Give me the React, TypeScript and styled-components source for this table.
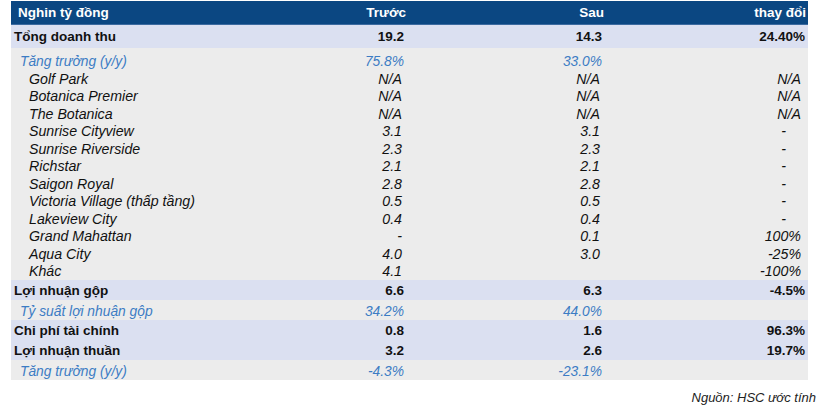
import React from "react";
import styled, { createGlobalStyle } from "styled-components";

type Kind = "total" | "growth" | "item";

interface Row {
  label: string;
  kind: Kind;
  before: string;
  after: string;
  change: string;
  height: number;
}

const rows: Row[] = [
  { label: "Tổng doanh thu", kind: "total", before: "19.2", after: "14.3", change: "24.40%", height: 23 },
  { label: "Tăng trưởng (y/y)", kind: "growth", before: "75.8%", after: "33.0%", change: "", height: 22 },
  { label: "Golf Park", kind: "item", before: "N/A", after: "N/A", change: "N/A", height: 17.5 },
  { label: "Botanica Premier", kind: "item", before: "N/A", after: "N/A", change: "N/A", height: 17.5 },
  { label: "The Botanica", kind: "item", before: "N/A", after: "N/A", change: "N/A", height: 17.5 },
  { label: "Sunrise Cityview", kind: "item", before: "3.1", after: "3.1", change: "-", height: 17.5 },
  { label: "Sunrise Riverside", kind: "item", before: "2.3", after: "2.3", change: "-", height: 17.5 },
  { label: "Richstar", kind: "item", before: "2.1", after: "2.1", change: "-", height: 17.5 },
  { label: "Saigon Royal", kind: "item", before: "2.8", after: "2.8", change: "-", height: 17.5 },
  { label: "Victoria Village (thấp tầng)", kind: "item", before: "0.5", after: "0.5", change: "-", height: 17.5 },
  { label: "Lakeview City", kind: "item", before: "0.4", after: "0.4", change: "-", height: 17.5 },
  { label: "Grand Mahattan", kind: "item", before: "-", after: "0.1", change: "100%", height: 17.5 },
  { label: "Aqua City", kind: "item", before: "4.0", after: "3.0", change: "-25%", height: 17.5 },
  { label: "Khác", kind: "item", before: "4.1", after: "", change: "-100%", height: 17.5 },
  { label: "Lợi nhuận gộp", kind: "total", before: "6.6", after: "6.3", change: "-4.5%", height: 20 },
  { label: "Tỷ suất lợi nhuận gộp", kind: "growth", before: "34.2%", after: "44.0%", change: "", height: 20 },
  { label: "Chi phí tài chính", kind: "total", before: "0.8", after: "1.6", change: "96.3%", height: 20 },
  { label: "Lợi nhuận thuần", kind: "total", before: "3.2", after: "2.6", change: "19.7%", height: 20 },
  { label: "Tăng trưởng (y/y)", kind: "growth", before: "-4.3%", after: "-23.1%", change: "", height: 20 },
];

const App = () => {
  return (
    <>
      <GlobalStyle />
      <Page>
        <Table>
          <HeaderRow>
            <HeadLabel>Nghin tỷ đồng</HeadLabel>
            <HeadCell>Trước</HeadCell>
            <HeadCell>Sau</HeadCell>
            <HeadCell>thay đổi</HeadCell>
          </HeaderRow>
          {rows.map((row, i) => (
            <BodyRow key={row.label + i} $kind={row.kind} style={{ height: row.height }}>
              <Label $kind={row.kind}>{row.label}</Label>
              <Value $kind={row.kind} $pad={row.kind === "item" ? 4 : 2}>
                {row.before}
              </Value>
              <Value $kind={row.kind} $pad={row.kind === "item" ? 4 : 2}>
                {row.after}
              </Value>
              <Value $kind={row.kind} $pad={row.change === "-" ? 20 : row.kind === "item" ? 5 : 1}>
                {row.change}
              </Value>
            </BodyRow>
          ))}
        </Table>
        <Source>Nguồn: HSC ước tính</Source>
      </Page>
    </>
  );
};

export default App;

const GlobalStyle = createGlobalStyle`
  body {
    margin: 0;
    background: #ffffff;
    font-family: "Liberation Sans", Arial, sans-serif;
  }
`;

const Page = styled.div`
  width: 824px;
  height: 413px;
  padding: 1px 8px 0 11px;
  box-sizing: border-box;
`;

const Table = styled.div`
  width: 797px;
  display: flex;
  flex-direction: column;
`;

const columns = "269px 126px 198px 202px";

const HeaderRow = styled.div`
  display: grid;
  grid-template-columns: ${columns};
  height: 24px;
  align-items: center;
  padding-right: 2px;
  background-color: #0b4782;
  border-bottom: 1px solid #3b6aa0;
  box-sizing: border-box;
  color: #ffffff;
  font-weight: bold;
  font-size: 13.5px;
`;

const HeadLabel = styled.div`
  padding-left: 7px;
`;

const HeadCell = styled.div`
  text-align: right;
`;

const BodyRow = styled.div<{ $kind: Kind }>`
  display: grid;
  grid-template-columns: ${columns};
  align-items: ${(p) => (p.$kind === "growth" ? "end" : "center")};
  padding-right: 2px;
  padding-bottom: ${(p) => (p.$kind === "growth" ? "1px" : "0")};
  box-sizing: border-box;
  background-color: ${(p) => (p.$kind === "total" ? "#dbe0f1" : "#ececec")};
`;

const fontSize = (k: Kind) => (k === "total" ? "13.5px" : k === "growth" ? "13.8px" : "14.2px");

const Label = styled.div<{ $kind: Kind }>`
  white-space: nowrap;
  padding-left: ${(p) => (p.$kind === "total" ? "3px" : p.$kind === "growth" ? "9px" : "18px")};
  font-size: ${(p) => fontSize(p.$kind)};
  font-weight: ${(p) => (p.$kind === "total" ? "bold" : "normal")};
  font-style: ${(p) => (p.$kind === "total" ? "normal" : "italic")};
  color: ${(p) => (p.$kind === "growth" ? "#3c7cc4" : "#111111")};
`;

const Value = styled.div<{ $kind: Kind; $pad: number }>`
  text-align: right;
  white-space: nowrap;
  padding-right: ${(p) => p.$pad}px;
  font-size: ${(p) => fontSize(p.$kind)};
  font-weight: ${(p) => (p.$kind === "total" ? "bold" : "normal")};
  font-style: ${(p) => (p.$kind === "total" ? "normal" : "italic")};
  color: ${(p) => (p.$kind === "growth" ? "#3c7cc4" : "#111111")};
`;

const Source = styled.div`
  margin-top: 10px;
  text-align: right;
  font-size: 13px;
  font-style: italic;
  color: #222222;
`;
